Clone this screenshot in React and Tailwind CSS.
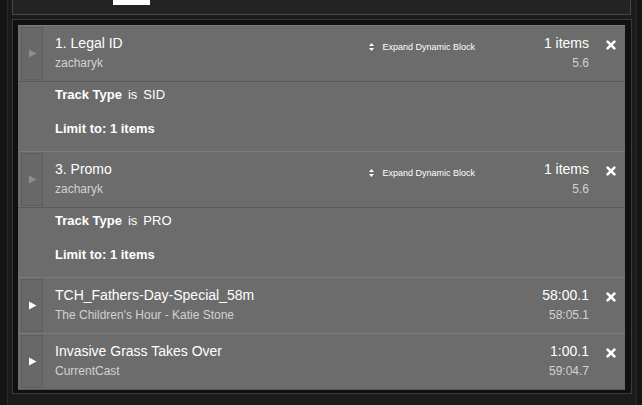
import React from "react";

const rows = [
  {
    kind: "dynamic",
    title: "1. Legal ID",
    sub: "zacharyk",
    right: "1 items",
    rightSub: "5.6",
    type: "SID",
  },
  {
    kind: "dynamic",
    title: "3. Promo",
    sub: "zacharyk",
    right: "1 items",
    rightSub: "5.6",
    type: "PRO",
  },
  {
    kind: "track",
    title: "TCH_Fathers-Day-Special_58m",
    sub: "The Children's Hour - Katie Stone",
    right: "58:00.1",
    rightSub: "58:05.1",
  },
  {
    kind: "track",
    title: "Invasive Grass Takes Over",
    sub: "CurrentCast",
    right: "1:00.1",
    rightSub: "59:04.7",
  },
];

function PlayIcon({ dim }) {
  return (
    <svg width="9" height="9" viewBox="0 0 9 9">
      <path d="M1 0.5 L8.5 4.5 L1 8.5 Z" fill={dim ? "#8e8e8e" : "#ffffff"} />
    </svg>
  );
}

function CloseIcon() {
  return (
    <svg width="10" height="10" viewBox="0 0 10 10">
      <path d="M1.6 1.6 L8.4 8.4 M8.4 1.6 L1.6 8.4" stroke="#ffffff" strokeWidth="2.6" strokeLinecap="round" />
    </svg>
  );
}

function SortIcon() {
  return (
    <svg width="5" height="8" viewBox="0 0 5 8">
      <path d="M0 3 L2.5 0 L5 3 Z M0 5 L2.5 8 L5 5 Z" fill="#ffffff" />
    </svg>
  );
}

function RowHeader({ row }) {
  const dynamic = row.kind === "dynamic";
  return (
    <div
      className={`flex h-[56px] border-t border-[#7a7a7a] ${dynamic ? "border-b border-b-[#5a5a5a] h-[57px]" : ""}`}
    >
      <div className="ml-[3px] my-[1px] w-[22px] flex items-center justify-center bg-[#686868] border border-[#5e5e5e]">
        <PlayIcon dim={dynamic} />
      </div>
      <div className="ml-[12px] flex-1 min-w-0 pt-[8px]">
        <div className="text-[14px] leading-[18px] text-white whitespace-nowrap">{row.title}</div>
        <div className="mt-[4px] text-[12px] leading-[15px] text-[#d2d2d2] whitespace-nowrap">{row.sub}</div>
      </div>
      {dynamic && (
        <div className="flex items-center gap-[8px] pt-[12px] h-[22px] mr-[34px] mt-[4px]">
          <SortIcon />
          <span className="text-[9px] leading-[12px] text-white whitespace-nowrap">Expand Dynamic Block</span>
        </div>
      )}
      <div className="w-[80px] pt-[8px] text-right">
        <div className="text-[14px] leading-[18px] text-white">{row.right}</div>
        <div className="mt-[4px] text-[12px] leading-[15px] text-[#d2d2d2]">{row.rightSub}</div>
      </div>
      <div className="w-[36px] flex justify-center pt-[14px] pl-[8px]">
        <div>
          <CloseIcon />
        </div>
      </div>
    </div>
  );
}

function DynamicDetail({ type }) {
  return (
    <div className="h-[69px] pl-[37px] pt-[5px] text-[13px] leading-[16px] text-white">
      <div className="whitespace-nowrap">
        <span className="font-bold">Track Type</span>
        <span className="ml-[6px]">is</span>
        <span className="ml-[6px]">{type}</span>
      </div>
      <div className="mt-[18px] font-bold">Limit to: 1 items</div>
    </div>
  );
}

export default function App() {
  return (
    <div className="w-[642px] h-[405px] overflow-hidden bg-[#151515] font-['Liberation_Sans',Arial,sans-serif]">
      <div className="ml-[7px] w-[630px] h-full border-x border-[#272727] bg-[#1b1b1b] pl-[4px]">
        <div className="w-[619px] h-[15px] bg-[#232323] border-x border-b border-[#474747]">
          <div className="ml-[100px] w-[37px] h-[5px] bg-white" />
        </div>
        <div className="mt-[4px] w-[620px] h-[375px] border border-[#3a3a3a] bg-[#101010] pl-[5px] pt-[5px]">
          <div className="w-[607px] bg-[#6c6c6c] border-b border-[#5a5a5a]">
            {rows.map((row, i) => (
              <div key={i}>
                <RowHeader row={row} />
                {row.kind === "dynamic" && <DynamicDetail type={row.type} />}
              </div>
            ))}
          </div>
        </div>
      </div>
    </div>
  );
}
